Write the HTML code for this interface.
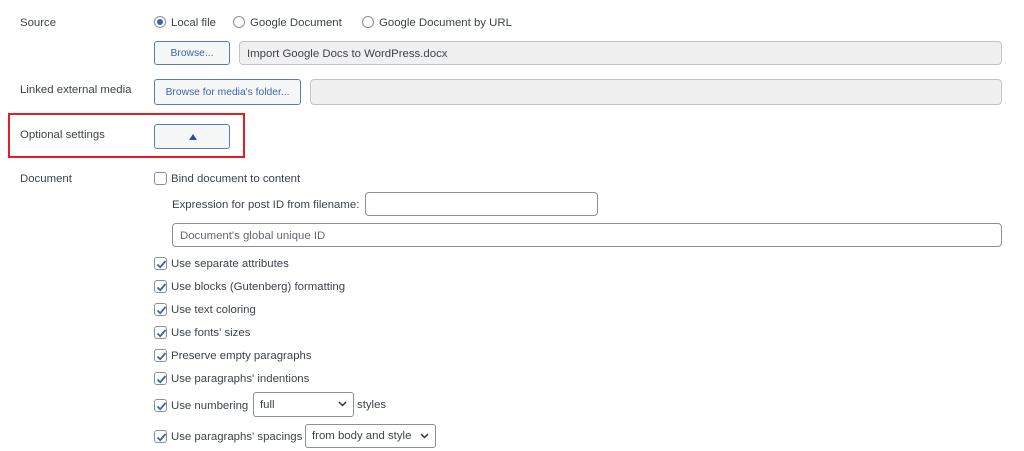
<!DOCTYPE html>
<html><head><style>
body{margin:0;width:1024px;height:451px;background:#fff;font-family:"Liberation Sans",sans-serif;font-size:11.4px;color:#3c434a;position:relative;overflow:hidden}
.a{position:absolute;white-space:nowrap;line-height:14px}
.btn{position:absolute;border:1px solid #5b7bc0;border-radius:3px;background:#f6f7f7;color:#3d62b3;font-size:10.3px;text-align:center;box-sizing:border-box}
.inp{position:absolute;border:1px solid #8c8f94;border-radius:4px;box-sizing:border-box;background:#fff}
.dis{background:#f0f0f1;border-color:#c3c4c7}
.rad{position:absolute;width:12px;height:12px;border:1px solid #8c8f94;border-radius:50%;box-sizing:border-box}
.cb{position:absolute;width:13px;height:13px;border:1px solid #8c8f94;border-radius:3px;box-sizing:border-box;background:#fff}
.cb svg{position:absolute;left:0;top:0}
.sel{position:absolute;border:1px solid #8c8f94;border-radius:3px;box-sizing:border-box;padding-left:6px;line-height:24px;font-size:11.4px}
.sel svg{position:absolute;right:6px;top:8px}
</style></head><body>
<div class="a" style="left:20px;top:16px">Source</div>
<div class="rad" style="left:154px;top:16px;"><div style="position:absolute;left:2px;top:2px;width:6px;height:6px;border-radius:50%;background:#3d62b3"></div></div>
<div class="a" style="left:171px;top:16px">Local file</div>
<div class="rad" style="left:233px;top:16px"></div>
<div class="a" style="left:250px;top:16px">Google Document</div>
<div class="rad" style="left:362px;top:16px"></div>
<div class="a" style="left:379px;top:16px">Google Document by URL</div>
<div class="btn" style="left:154px;top:41px;width:76px;height:24px;line-height:23px">Browse...</div>
<div class="inp dis" style="left:239px;top:41px;width:763px;height:24px;padding-left:7px;line-height:24px;color:#3c434a">Import Google Docs to WordPress.docx</div>
<div class="a" style="left:20px;top:83px">Linked external media</div>
<div class="btn" style="left:154px;top:79px;width:147px;height:26px;line-height:25px">Browse for media's folder...</div>
<div class="inp dis" style="left:310px;top:79px;width:692px;height:26px"></div>
<div style="position:absolute;left:8px;top:113px;width:237px;height:45px;border:2px solid #e51c23;box-sizing:border-box"></div>
<div class="a" style="left:20px;top:128px">Optional settings</div>
<div class="btn" style="left:154px;top:124px;width:76px;height:25px"><svg width="8" height="6" style="position:absolute;left:34px;top:9px"><path d="M0 6L4 0L8 6Z" fill="#2f4f8f"/></svg></div>
<div class="a" style="left:20px;top:172px">Document</div>
<div class="cb" style="left:154px;top:172px"></div>
<div class="a" style="left:171px;top:172px">Bind document to content</div>
<div class="a" style="left:172px;top:198px">Expression for post ID from filename:</div>
<div class="inp" style="left:365px;top:192px;width:233px;height:24px"></div>
<div class="inp" style="left:172px;top:223px;width:830px;height:24px;padding-left:7px;line-height:24px;color:#646970">Document's global unique ID</div>
<div id="cbs"></div>
<div class="sel" style="left:253px;top:392px;width:101px;height:25px">full<svg width="9" height="6"><path d="M1 1L4.5 4.5L8 1" stroke="#333" stroke-width="1.5" fill="none"/></svg></div>
<div class="a" style="left:357px;top:398px">styles</div>
<div class="sel" style="left:305px;top:424px;width:131px;height:24px;line-height:23px">from body and style<svg width="9" height="6"><path d="M1 1L4.5 4.5L8 1" stroke="#333" stroke-width="1.5" fill="none"/></svg></div>
<script>
var rows=[[263,"Use separate attributes"],[286,"Use blocks (Gutenberg) formatting"],[309,"Use text coloring"],[332,"Use fonts' sizes"],[355,"Preserve empty paragraphs"],[378,"Use paragraphs' indentions"],[405,"Use numbering"],[436,"Use paragraphs' spacings"]];
var h="";rows.forEach(function(r){var y=r[0];h+='<div class="cb" style="left:154px;top:'+(y-6)+'px"><svg width="13" height="13"><path d="M2.5 6.5L5.2 9.2L10.5 3" stroke="#3d62b3" stroke-width="1.8" fill="none"/></svg></div><div class="a" style="left:171px;top:'+(y-6)+'px">'+r[1]+'</div>';});
document.getElementById("cbs").innerHTML=h;
</script>
</body></html>
